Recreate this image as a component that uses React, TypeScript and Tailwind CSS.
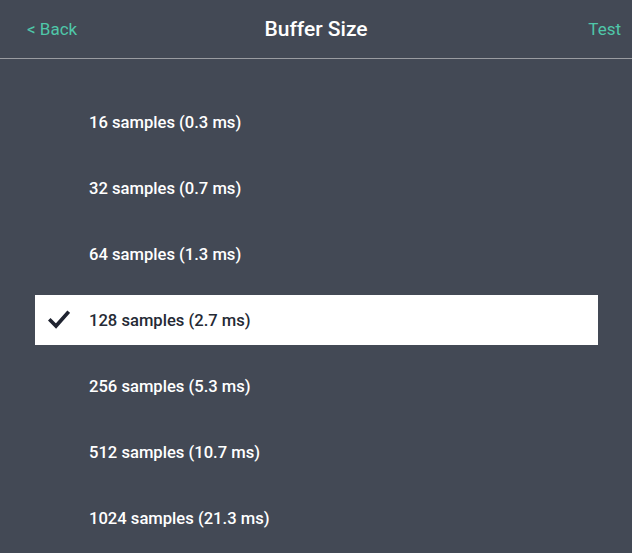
import React from 'react'

const options = [
  { samples: 16, ms: '0.3' },
  { samples: 32, ms: '0.7' },
  { samples: 64, ms: '1.3' },
  { samples: 128, ms: '2.7' },
  { samples: 256, ms: '5.3' },
  { samples: 512, ms: '10.7' },
  { samples: 1024, ms: '21.3' },
]

export default function App() {
  const selected = 128

  return (
    <div className="w-[632px] h-[553px] overflow-hidden bg-[#434955] font-['Roboto',sans-serif]">
      {/* Header */}
      <div className="relative h-[59px] flex items-center justify-between px-[27px] border-b border-[#9a9ca1]">
        <button className="text-[17px] text-[#4fc7a9] leading-none pt-[1px]">&lt; Back</button>
        <div className="absolute left-0 right-0 text-center text-[21px] font-medium text-white pointer-events-none pt-[1px]">
          Buffer Size
        </div>
        <button className="text-[17px] text-[#4fc7a9] leading-none pt-[1px] -mr-[16px]">Test</button>
      </div>

      {/* Options */}
      <div className="flex flex-col gap-[16px] pt-[38px] pl-[35px] w-[598px]">
        {options.map((opt) => {
          const active = opt.samples === selected
          return (
            <div
              key={opt.samples}
              className={`relative h-[50px] flex items-center pl-[54px] pt-[2px] text-[16.6px] font-medium ${
                active ? 'bg-white text-[#252a35]' : 'text-white'
              }`}
            >
              {active && (
                <svg
                  className="absolute left-[13px] top-[15px]"
                  width="22"
                  height="19"
                  viewBox="0 0 22 19"
                  fill="none"
                >
                  <path
                    d="M2.5 10.5 L8 16 L19.5 3"
                    stroke="#1f2330"
                    strokeWidth="3.6"
                    strokeLinecap="square"
                  />
                </svg>
              )}
              {opt.samples} samples ({opt.ms} ms)
            </div>
          )
        })}
      </div>
    </div>
  )
}
